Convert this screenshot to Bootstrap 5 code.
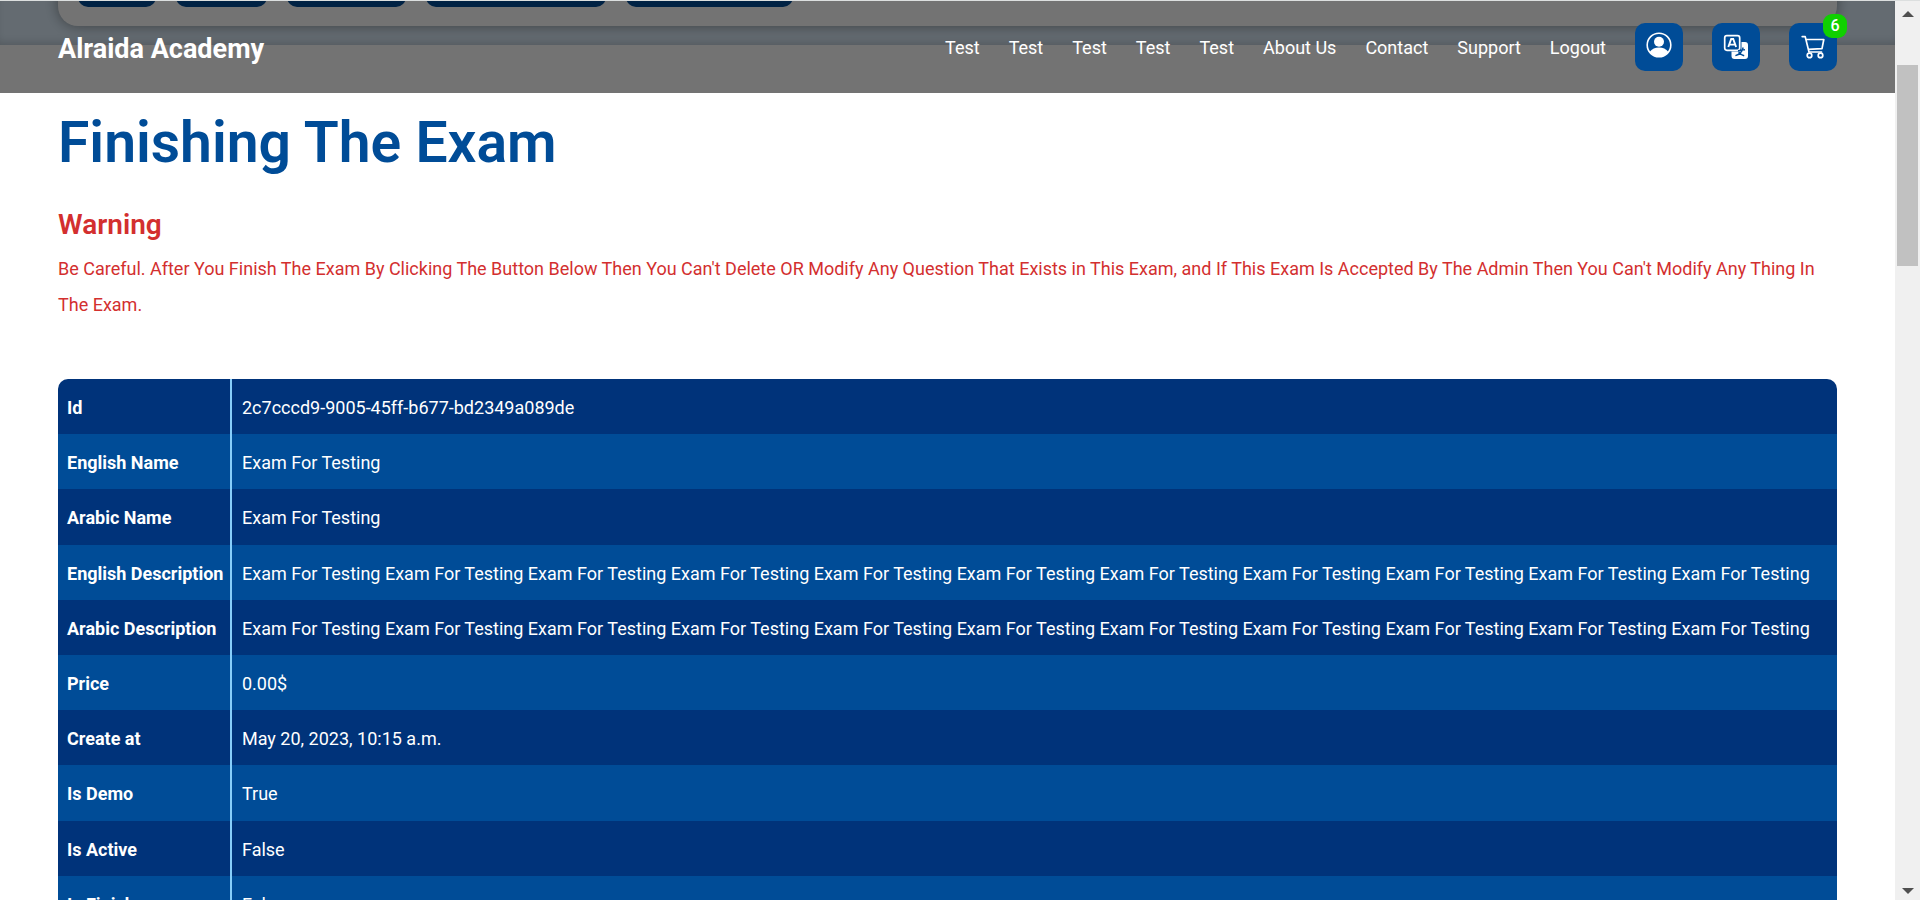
<!DOCTYPE html>
<html lang="en">
<head>
<meta charset="utf-8">
<meta name="viewport" content="width=device-width, initial-scale=1">
<title>Alraida Academy</title>
<link rel="stylesheet" href="https://cdn.jsdelivr.net/npm/bootstrap@5.3.0/dist/css/bootstrap.min.css">
<style>
  :root { --brand: #004c97; --brand-dark: #00337a; --danger: #d32f2f; }
  body { font-family: Roboto, "Noto Sans", sans-serif; font-size: 18px; color: #fff; background: #fff; }
  .page-frame { border-top: 1px solid #dcdfdf; }
  .gutter { padding-left: 58px; padding-right: 58px; }

  .hero { height: 44px; background: #deeefb; box-shadow: inset 0 -6px 10px -4px rgba(0, 0, 0, .18); }
  .hero-panel { background: #fff; border-radius: 0 0 20px 20px; padding: 0 20px 19px; margin-bottom: 19px; height: 70px; gap: 20px; box-shadow: 0 0 14px rgba(0, 0, 0, .4); }
  .hero-tab { height: 40px; padding: 0; border: 0; border-radius: 10px; background: var(--brand); }
  .w-a { width: 78px; } .w-b { width: 91px; } .w-c { width: 119px; } .w-d { width: 180px; } .w-e { width: 167px; }

  .topbar { background: rgba(0, 0, 0, .55); padding-top: 22px; padding-bottom: 22px; }
  .brand-link { font-size: 27px; font-weight: 700; line-height: 34px; padding-top: 4px; }
  .menu { gap: 29px; }
  .menu a { color: #fff; text-decoration: none; }
  .icon-btn { width: 48px; height: 48px; padding: 0; border: 0; border-radius: 10px; background: var(--brand); color: #fff; }
  .cart-count { top: -9px; right: -10px; width: 24px; height: 24px; border-radius: 9px; background: #10d000; font-size: 16px; font-weight: 500; line-height: 24px; }

  .content { padding-top: 64px; }
  .page-title { color: var(--brand); font-size: 57px; font-weight: 600; line-height: 68px; margin-bottom: 31px; }
  .warn { color: var(--danger); }
  .warn-title { font-size: 28px; font-weight: 600; line-height: 34px; margin-bottom: 9px; }
  .warn-text { line-height: 36px; margin-bottom: 56px; }

  .details { border-radius: 10px; overflow: hidden; }
  .details table { width: 100%; height: 552px; line-height: 27px; }
  .details tr { background: var(--brand); }
  .details tr:nth-child(odd) { background: var(--brand-dark); }
  .details th { width: 173px; padding: 15px 0 13px 9px; border-right: 2px solid #87cefa; white-space: nowrap; font-weight: 700; }
  .details td { padding: 15px 10px 13px; }

  .scroll-rail { width: 25px; background: #f0f0f0; padding: 10px 0 6px; }
  .scroll-thumb { width: 21px; height: 201px; margin-top: 48px; background: #c1c1c1; }
</style>
</head>
<body>
<div class="page-frame d-flex vh-100 overflow-hidden">
  <div class="position-relative flex-grow-1 overflow-hidden">

    <div class="hero gutter d-flex flex-column justify-content-end overflow-hidden">
      <div class="hero-panel d-flex align-items-end flex-shrink-0">
        <button type="button" class="hero-tab w-a"></button>
        <button type="button" class="hero-tab w-b"></button>
        <button type="button" class="hero-tab w-c"></button>
        <button type="button" class="hero-tab w-d"></button>
        <button type="button" class="hero-tab w-e"></button>
      </div>
    </div>

    <nav class="topbar gutter position-absolute top-0 start-0 w-100 d-flex align-items-center justify-content-between">
      <a href="#" class="brand-link text-white text-decoration-none">Alraida Academy</a>
      <div class="menu d-flex align-items-center">
        <a href="#">Test</a>
        <a href="#">Test</a>
        <a href="#">Test</a>
        <a href="#">Test</a>
        <a href="#">Test</a>
        <a href="#">About Us</a>
        <a href="#">Contact</a>
        <a href="#">Support</a>
        <a href="#">Logout</a>
        <button type="button" class="icon-btn d-flex justify-content-center pt-2" aria-label="Account">
          <svg width="28" height="28" viewBox="0 0 28 28">
            <circle cx="14" cy="14" r="11.8" fill="none" stroke="#fff" stroke-width="1.6"/>
            <circle cx="14" cy="10.8" r="5" fill="#fff"/>
            <path d="M4.6 21C7 18 10 16.6 14 16.6S21 18 23.400 21A11.8 11.8 0 0 1 4.600 21z" fill="#fff"/>
          </svg>
        </button>
        <button type="button" class="icon-btn d-flex align-items-center justify-content-center" aria-label="Language">
          <svg width="26" height="26" viewBox="0 0 26 26">
            <path d="M18.500 8H22a3 3 0 0 1 3 3v11a3 3 0 0 1-3 3H11.500a3 3 0 0 1-3-3v-4.500H15.500a3 3 0 0 0 3-3z" fill="#fff"/>
            <rect x="1.700" y="1.700" width="15" height="14.600" rx="2.200" fill="none" stroke="#fff" stroke-width="1.700"/>
            <path d="M5.300 13 8.200 5h2L13.100 13M6.500 10.600h5.400" fill="none" stroke="#fff" stroke-width="1.900"/>
            <path d="M12.400 21.700c4-1.200 6.800-4 7.800-8.200M15 16.600l5.300-.7 1.700-.2M15.600 17.600c1.200 2 3 3.400 5.600 4.100" fill="none" stroke="#004c97" stroke-width="1.400"/>
          </svg>
        </button>
        <button type="button" class="icon-btn position-relative d-flex align-items-center justify-content-center" aria-label="Cart">
          <svg width="26" height="26" viewBox="0 0 26 26" fill="none" stroke="#fff" stroke-width="1.700" stroke-linecap="round" stroke-linejoin="round">
            <path d="M2.200 2.600h3L9 18h12.500M5.900 5.500h17.900l-1.800 9.200L8.300 15.400"/>
            <circle cx="9.500" cy="21.400" r="2.300"/>
            <circle cx="20.500" cy="21.400" r="2.300"/>
          </svg>
          <span class="cart-count position-absolute text-center">6</span>
        </button>
      </div>
    </nav>

    <main class="content gutter">
      <h1 class="page-title">Finishing The Exam</h1>
      <h2 class="warn warn-title">Warning</h2>
      <p class="warn warn-text">Be Careful. After You Finish The Exam By Clicking The Button Below Then You Can't Delete OR Modify Any Question That Exists in This Exam, and If This Exam Is Accepted By The Admin Then You Can't Modify Any Thing In The Exam.</p>
      <div class="details">
        <table>
          <tbody>
            <tr><th scope="row">Id</th><td>2c7cccd9-9005-45ff-b677-bd2349a089de</td></tr>
            <tr><th scope="row">English Name</th><td>Exam For Testing</td></tr>
            <tr><th scope="row">Arabic Name</th><td>Exam For Testing</td></tr>
            <tr><th scope="row">English Description</th><td>Exam For Testing Exam For Testing Exam For Testing Exam For Testing Exam For Testing Exam For Testing Exam For Testing Exam For Testing Exam For Testing Exam For Testing Exam For Testing</td></tr>
            <tr><th scope="row">Arabic Description</th><td>Exam For Testing Exam For Testing Exam For Testing Exam For Testing Exam For Testing Exam For Testing Exam For Testing Exam For Testing Exam For Testing Exam For Testing Exam For Testing</td></tr>
            <tr><th scope="row">Price</th><td>0.00$</td></tr>
            <tr><th scope="row">Create at</th><td>May 20, 2023, 10:15 a.m.</td></tr>
            <tr><th scope="row">Is Demo</th><td>True</td></tr>
            <tr><th scope="row">Is Active</th><td>False</td></tr>
            <tr><th scope="row">Is Finish</th><td>False</td></tr>
          </tbody>
        </table>
      </div>
    </main>
  </div>

  <div class="scroll-rail d-flex flex-column align-items-center flex-shrink-0" aria-hidden="true">
    <svg width="12" height="6" viewBox="0 0 12 6"><path d="M0 6 6 0l6 6z" fill="#505050"/></svg>
    <div class="scroll-thumb"></div>
    <svg class="mt-auto" width="12" height="6" viewBox="0 0 12 6"><path d="M0 0h12L6 6z" fill="#505050"/></svg>
  </div>
</div>
<script src="https://cdn.jsdelivr.net/npm/bootstrap@5.3.0/dist/js/bootstrap.bundle.min.js"></script>
</body>
</html>
